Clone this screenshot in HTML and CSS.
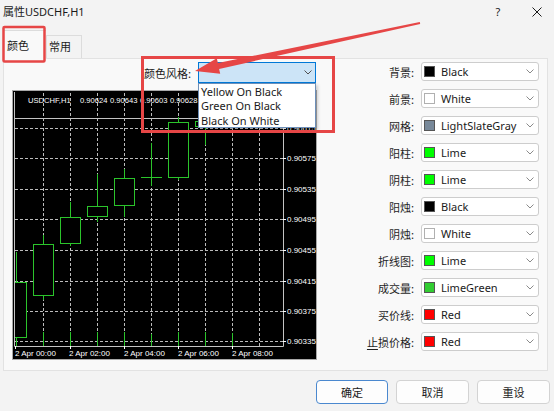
FILE: index.html
```html
<!DOCTYPE html>
<html lang="zh">
<head>
<meta charset="utf-8">
<title>属性USDCHF,H1</title>
<link rel="stylesheet" href="styles.css">
</head>
<body>
<div class="titlebar">
  <span class="title">属性USDCHF,H1</span>
  <span class="help">?</span>
  <svg class="close" width="10" height="10" viewBox="0 0 10 10"><path d="M0.5 0.5L9.5 9.5M9.5 0.5L0.5 9.5" stroke="#1a1a1a" stroke-width="1"/></svg>
</div>
<div class="tabs">
  <div class="tab active">颜色</div>
  <div class="tab">常用</div>
</div>
<div class="panel">
  <div class="left">
    <div class="style-row">
      <span class="style-label">颜色风格:</span>
      <div class="style-combo">
        <svg class="chev" width="8" height="5" viewBox="0 0 8 5"><path d="M0.5 0.5L4 4L7.5 0.5" fill="none" stroke="#505050"/></svg>
      </div>
      <div class="dropdown">
        <div class="item">Yellow On Black</div>
        <div class="item">Green On Black</div>
        <div class="item">Black On White</div>
      </div>
    </div>
    <div class="chart">
      <svg width="305" height="270" viewBox="12 90 305 270">
        <defs><clipPath id="plot"><rect x="15" y="93" width="268" height="253"/></clipPath></defs>
        <rect x="12" y="90" width="305" height="270" fill="#000"/>
        <rect x="12.5" y="90.5" width="304" height="269" fill="none" stroke="#a8a8a8"/>
        <g stroke="#bcbcbc" stroke-dasharray="3 2" fill="none">
          <path d="M15 128.5H283M15 158.5H283M15 189.5H283M15 219.5H283M15 250.5H283M15 281.5H283M15 311.5H283M15 341.5H283"/>
          <path d="M43.5 93V346M70.5 93V346M97.5 93V346M124.5 93V346M151.5 93V346M178.5 93V346M205.5 93V346M232.5 93V346M259.5 93V346"/>
        </g>
        <path d="M14.5 92V346.5H283.5V92" fill="none" stroke="#c4c4c4"/>
        <path d="M15 118.5H283" stroke="#c4c4c4"/>
        <g clip-path="url(#plot)" stroke="#2bc42b" fill="#000">
          <path d="M16.5 252V346"/>
          <rect x="6.5" y="282.5" width="20" height="55"/>
          <path d="M43.5 235V300"/>
          <rect x="33.5" y="244.5" width="20" height="51"/>
          <path d="M70.5 202V246"/>
          <rect x="60.5" y="217.5" width="20" height="26"/>
          <path d="M97.5 174V222"/>
          <rect x="87.5" y="206.5" width="20" height="10"/>
          <path d="M124.5 169V217"/>
          <rect x="114.5" y="178.5" width="20" height="27"/>
          <path d="M151.5 143V186M141 177.5H162"/>
          <path d="M178.5 117V180"/>
          <rect x="168.5" y="122.5" width="20" height="55"/>
          <path d="M205.5 115V145"/>
          <rect x="195.5" y="121.5" width="20" height="5"/>
          <path d="M232.5 100V125"/>
          <rect x="222.5" y="105.5" width="20" height="12"/>
          <path d="M43.5 332V346M70.5 332V346M97.5 332V346M124.5 332V346M151.5 334V346M178.5 332V346M205.5 332V346M232.5 333V346"/>
        </g>
        <g stroke="#ffffff">
          <path d="M283 128.5H286M283 158.5H286M283 189.5H286M283 219.5H286M283 250.5H286M283 281.5H286M283 311.5H286M283 341.5H286"/>
          <path d="M15.5 346V349M70.5 346V349M124.5 346V349M178.5 346V349M232.5 346V349"/>
        </g>
        <g class="ctext" fill="#ffffff">
          <text class="hdr" x="28" y="103">USDCHF,H1</text>
          <text class="hdr" x="80" y="103">0.90624</text>
          <text class="hdr" x="110" y="103">0.90643</text>
          <text class="hdr" x="140" y="103">0.90603</text>
          <text class="hdr" x="170" y="103">0.90628</text>
          <text x="287" y="131">0.90615</text>
          <text x="287" y="161">0.90575</text>
          <text x="287" y="192">0.90535</text>
          <text x="287" y="222">0.90495</text>
          <text x="287" y="253">0.90455</text>
          <text x="287" y="284">0.90415</text>
          <text x="287" y="314">0.90375</text>
          <text x="287" y="344">0.90335</text>
          <text x="15" y="356">2 Apr 00:00</text>
          <text x="69" y="356">2 Apr 02:00</text>
          <text x="124" y="356">2 Apr 04:00</text>
          <text x="178" y="356">2 Apr 06:00</text>
          <text x="232" y="356">2 Apr 08:00</text>
        </g>
      </svg>
    </div>
  </div>
  <div class="form">
    <span class="lbl">背景:</span>
    <div class="combo"><span class="swatch" style="background:#000000"></span><span class="name">Black</span><svg class="chev" width="8" height="5" viewBox="0 0 8 5"><path d="M0.5 0.5L4 4L7.5 0.5" fill="none" stroke="#8a8a8a"/></svg></div>
    <span class="lbl">前景:</span>
    <div class="combo"><span class="swatch light" style="background:#ffffff"></span><span class="name">White</span><svg class="chev" width="8" height="5" viewBox="0 0 8 5"><path d="M0.5 0.5L4 4L7.5 0.5" fill="none" stroke="#8a8a8a"/></svg></div>
    <span class="lbl">网格:</span>
    <div class="combo"><span class="swatch" style="background:#778899"></span><span class="name">LightSlateGray</span><svg class="chev" width="8" height="5" viewBox="0 0 8 5"><path d="M0.5 0.5L4 4L7.5 0.5" fill="none" stroke="#8a8a8a"/></svg></div>
    <span class="lbl">阳柱:</span>
    <div class="combo"><span class="swatch" style="background:#00ff00"></span><span class="name">Lime</span><svg class="chev" width="8" height="5" viewBox="0 0 8 5"><path d="M0.5 0.5L4 4L7.5 0.5" fill="none" stroke="#8a8a8a"/></svg></div>
    <span class="lbl">阴柱:</span>
    <div class="combo"><span class="swatch" style="background:#00ff00"></span><span class="name">Lime</span><svg class="chev" width="8" height="5" viewBox="0 0 8 5"><path d="M0.5 0.5L4 4L7.5 0.5" fill="none" stroke="#8a8a8a"/></svg></div>
    <span class="lbl">阳烛:</span>
    <div class="combo"><span class="swatch" style="background:#000000"></span><span class="name">Black</span><svg class="chev" width="8" height="5" viewBox="0 0 8 5"><path d="M0.5 0.5L4 4L7.5 0.5" fill="none" stroke="#8a8a8a"/></svg></div>
    <span class="lbl">阴烛:</span>
    <div class="combo"><span class="swatch light" style="background:#ffffff"></span><span class="name">White</span><svg class="chev" width="8" height="5" viewBox="0 0 8 5"><path d="M0.5 0.5L4 4L7.5 0.5" fill="none" stroke="#8a8a8a"/></svg></div>
    <span class="lbl">折线图:</span>
    <div class="combo"><span class="swatch" style="background:#00ff00"></span><span class="name">Lime</span><svg class="chev" width="8" height="5" viewBox="0 0 8 5"><path d="M0.5 0.5L4 4L7.5 0.5" fill="none" stroke="#8a8a8a"/></svg></div>
    <span class="lbl">成交量:</span>
    <div class="combo"><span class="swatch" style="background:#32cd32"></span><span class="name">LimeGreen</span><svg class="chev" width="8" height="5" viewBox="0 0 8 5"><path d="M0.5 0.5L4 4L7.5 0.5" fill="none" stroke="#8a8a8a"/></svg></div>
    <span class="lbl">买价线:</span>
    <div class="combo"><span class="swatch" style="background:#ff0000"></span><span class="name">Red</span><svg class="chev" width="8" height="5" viewBox="0 0 8 5"><path d="M0.5 0.5L4 4L7.5 0.5" fill="none" stroke="#8a8a8a"/></svg></div>
    <span class="lbl"><u>止</u>损价格:</span>
    <div class="combo"><span class="swatch" style="background:#ff0000"></span><span class="name">Red</span><svg class="chev" width="8" height="5" viewBox="0 0 8 5"><path d="M0.5 0.5L4 4L7.5 0.5" fill="none" stroke="#8a8a8a"/></svg></div>
  </div>
</div>
<div class="buttons">
  <button class="btn primary">确定</button>
  <button class="btn">取消</button>
  <button class="btn">重设</button>
</div>
<svg class="annot" width="554" height="411" viewBox="0 0 554 411">
  <rect x="3.5" y="27" width="41" height="34.5" rx="1" fill="none" stroke="#e64646" stroke-width="2.5"/>
  <rect x="142.5" y="57.5" width="191" height="74" fill="none" stroke="#e64646" stroke-width="3"/>
  <polygon points="195,71 216.8,58.2 217.9,63.1 419.8,22 420.2,24 219.1,68.9 220.2,73.8" fill="#e64646"/>
</svg>
</body>
</html>
```
FILE: styles.css
```css
* { box-sizing: border-box; }
html, body { margin: 0; padding: 0; }
body {
  width: 554px;
  height: 411px;
  overflow: hidden;
  position: relative;
  background: #f3f3f3;
  font-family: "Noto Sans", "Noto Sans CJK SC", sans-serif;
  font-size: 11px;
  color: #1a1a1a;
}
.titlebar {
  height: 24px;
  display: flex;
  align-items: center;
  padding-left: 3px;
  line-height: 14px;
}
.title { font-size: 11px; }
.help {
  margin-left: auto;
  width: 10px;
  text-align: center;
  margin-right: 29px;
  font-size: 11px;
}
.close { display: block; margin-right: 12px; }
.tabs {
  height: 34px;
  display: flex;
  align-items: flex-end;
  padding-left: 3px;
}
.tab {
  width: 36px;
  height: 23px;
  border: 1px solid #dcdcdc;
  border-bottom: none;
  padding: 0 0 3px 2px;
  display: flex;
  align-items: center;
  font-family: "Noto Sans CJK SC", sans-serif;
  line-height: 14px;
  background: #f3f3f3;
}
.tab.active {
  width: 43px;
  height: 29px;
  padding: 0 0 0 3px;
  margin-bottom: -1px;
  background: #f9f9f9;
  position: relative;
  z-index: 1;
  border-right: none;
}
.panel {
  width: 545px;
  height: 313px;
  margin-left: 3px;
  border: 1px solid #e2e2e2;
  background: #f9f9f9;
  display: flex;
}
.left {
  padding-left: 8px;
  display: flex;
  flex-direction: column;
}
.style-row {
  position: relative;
  width: 305px;
  height: 21px;
  margin-top: 3px;
  padding-right: 1px;
  display: flex;
  justify-content: flex-end;
  align-items: center;
  gap: 7px;
}
.style-label {
  font-family: "Noto Sans CJK SC", sans-serif;
  line-height: 14px;
}
.style-combo {
  width: 118px;
  height: 21px;
  background: #cce4f7;
  border: 1px solid #0078d7;
  display: flex;
  align-items: center;
  justify-content: flex-end;
  padding-right: 3px;
}
.chev { display: block; flex: none; }
.dropdown {
  position: absolute;
  top: 21px;
  right: 1px;
  width: 118px;
  height: 45px;
  background: #ffffff;
  border: 1px solid #6d8fb8;
  box-shadow: 2px 2px 3px rgba(0, 0, 0, 0.18);
  padding-top: 1px;
  z-index: 2;
}
.item {
  padding-left: 2px;
  line-height: 14.3px;
  height: 14.3px;
  white-space: nowrap;
  font-family: "Noto Sans", sans-serif;
  color: #1a1a1a;
}
.chart {
  margin-top: 7px;
  width: 305px;
  height: 270px;
}
.chart svg { display: block; }
.ctext text {
  font-family: "Liberation Sans", Arial, sans-serif;
  font-size: 8px;
}
.ctext text.hdr { font-size: 7.6px; }
.form {
  margin-left: auto;
  margin-right: 8px;
  margin-top: 3px;
  display: grid;
  grid-template-columns: auto 118px;
  grid-auto-rows: 19px;
  column-gap: 7px;
  row-gap: 8px;
  align-items: center;
  align-content: start;
}
.lbl {
  justify-self: end;
  font-family: "Noto Sans CJK SC", sans-serif;
  line-height: 14px;
  color: #1f1f1f;
}
.lbl u { text-underline-offset: 2px; }
.combo {
  height: 19px;
  border: 1px solid #cdcdcd;
  border-radius: 3px;
  background: #ffffff;
  display: flex;
  align-items: center;
  padding: 0 4px 0 2px;
}
.swatch {
  width: 11px;
  height: 11px;
  flex: none;
  border: 1px solid #555555;
  margin-right: 6px;
}
.swatch.light { border-color: #b0b0b0; }
.name {
  flex: 1;
  line-height: 14px;
  white-space: nowrap;
  font-family: "Noto Sans", sans-serif;
}
.combo .chev { margin-left: 2px; }
.buttons {
  margin-top: 9px;
  display: flex;
  justify-content: flex-end;
  gap: 8px;
  padding-right: 4px;
}
.btn {
  width: 73px;
  height: 24px;
  border: 1px solid #d3d3d3;
  border-radius: 4px;
  background: #fdfdfd;
  font-family: "Noto Sans CJK SC", sans-serif;
  font-size: 11px;
  color: #1a1a1a;
  padding: 0;
  display: flex;
  align-items: center;
  justify-content: center;
}
.btn.primary {
  width: 72px;
  border-color: #4a88cf;
}
.annot {
  position: absolute;
  left: 0;
  top: 0;
  pointer-events: none;
  z-index: 5;
}
```
